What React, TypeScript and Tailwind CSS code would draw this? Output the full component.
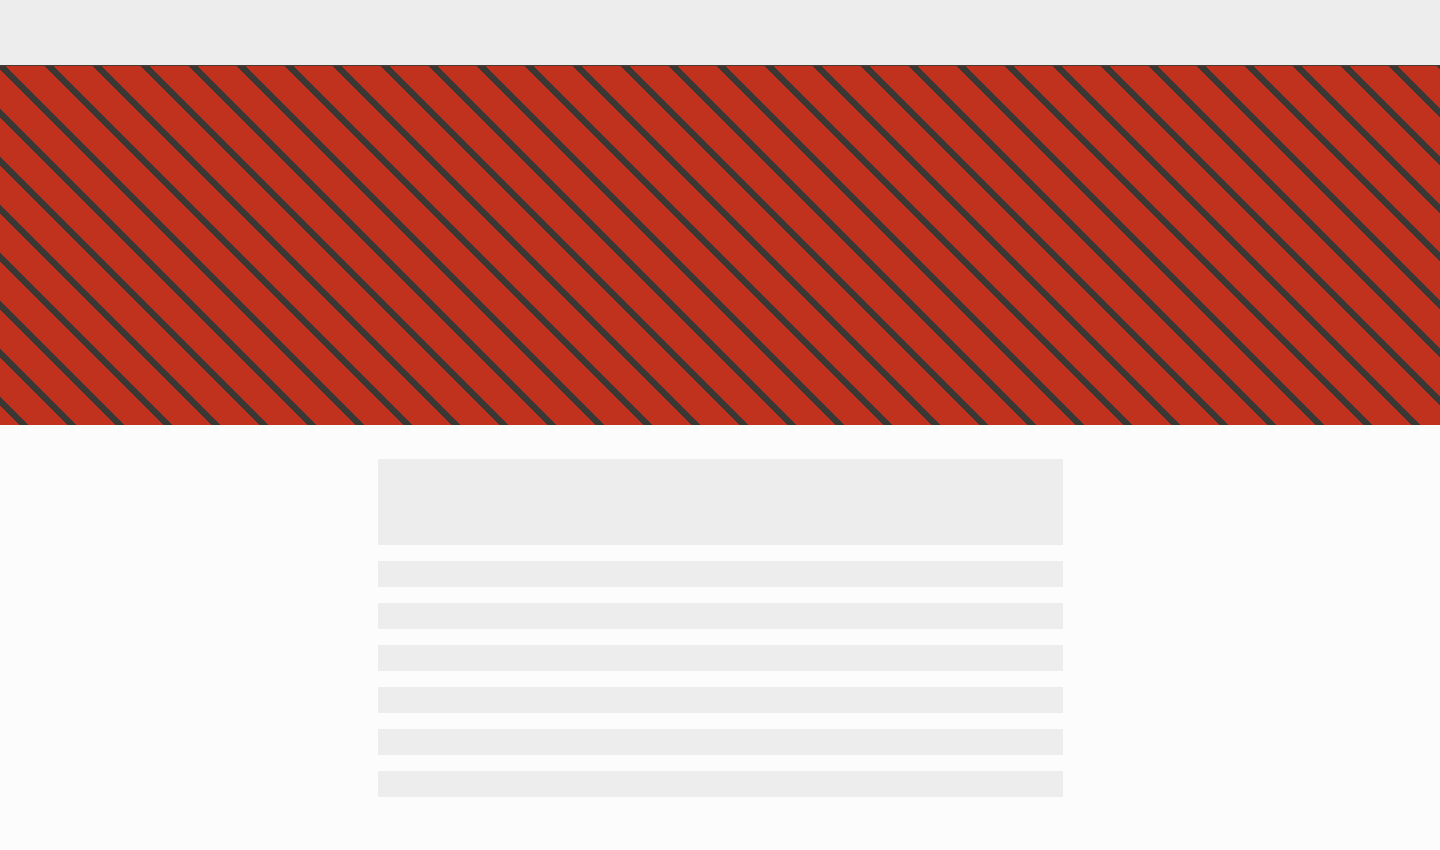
export default function App() {
  return (
    <div className="min-h-[850px] bg-[#fcfcfc] font-['Liberation_Sans',sans-serif]">
      <header className="h-[65px] bg-[#ededed]" />
      <section className="h-[360px] border-t border-[#4a3a36] bg-[#c0321d] bg-[linear-gradient(45deg,#3b3735_0%,#3b3735_5%,#c0321d_5%,#c0321d_45%,#3b3735_45%,#3b3735_55%,#c0321d_55%,#c0321d_95%,#3b3735_95%,#3b3735_100%)] bg-[length:48px_48px] bg-[position:0px_-1px]" />
      <main className="mx-auto w-[685px] pt-[34px] flex flex-col gap-4">
        <div className="h-[86px] bg-[#ededed]" />
        {[0, 1, 2, 3, 4, 5].map((i) => (
          <div key={i} className="h-[26px] bg-[#ededed]" />
        ))}
      </main>
    </div>
  );
}
